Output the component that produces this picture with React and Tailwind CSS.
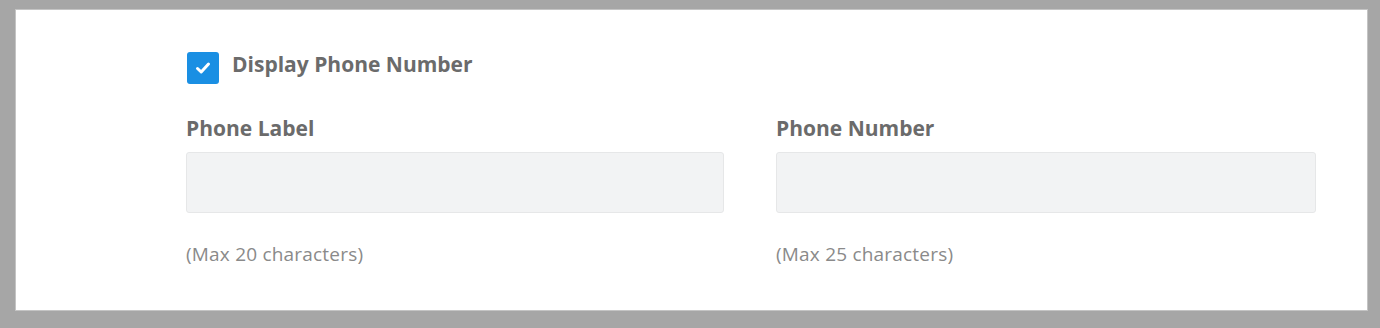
import React from "react";

function Field({ label, hint }) {
  return (
    <div className="flex flex-col">
      <div className="text-[21px] leading-[27px] font-bold text-[#6b6b6b]">{label}</div>
      <div className="mt-[10px] h-[61px] rounded-[3px] border border-[#e6e7e8] bg-[#f2f3f4]" />
      <div className="mt-[28px] text-[19px] leading-[26px] tracking-[0.2px] text-[#8a8a8a]">{hint}</div>
    </div>
  );
}

export default function App() {
  return (
    <div
      className="h-[328px] w-[1380px] bg-[#a6a6a6] pt-[10px] pl-[16px] pr-[13px] pb-[18px]"
      style={{ fontFamily: '"Open Sans", "Liberation Sans", sans-serif' }}
    >
      <div className="h-full bg-white pl-[170px] pr-[51px] pt-[42px] shadow-[0_0_0_1px_#c4c4c4]">
        <div className="flex items-start gap-[13px]">
          <div className="ml-[1px] flex h-[32px] w-[32px] items-center justify-center rounded-[3px] bg-[#1a8fe3]">
            <svg width="16" height="14" viewBox="0 0 16 14" fill="none">
              <path d="M2.5 7.5 L6.2 11 L13.5 3" stroke="white" strokeWidth="3" strokeLinecap="round" strokeLinejoin="round" />
            </svg>
          </div>
          <div className="mt-[-1px] text-[21px] leading-[27px] font-bold text-[#6b6b6b]">Display Phone Number</div>
        </div>
        <div className="mt-[31px] grid grid-cols-[538px_540px] gap-x-[52px]">
          <Field label="Phone Label" hint="(Max 20 characters)" />
          <Field label="Phone Number" hint="(Max 25 characters)" />
        </div>
      </div>
    </div>
  );
}
